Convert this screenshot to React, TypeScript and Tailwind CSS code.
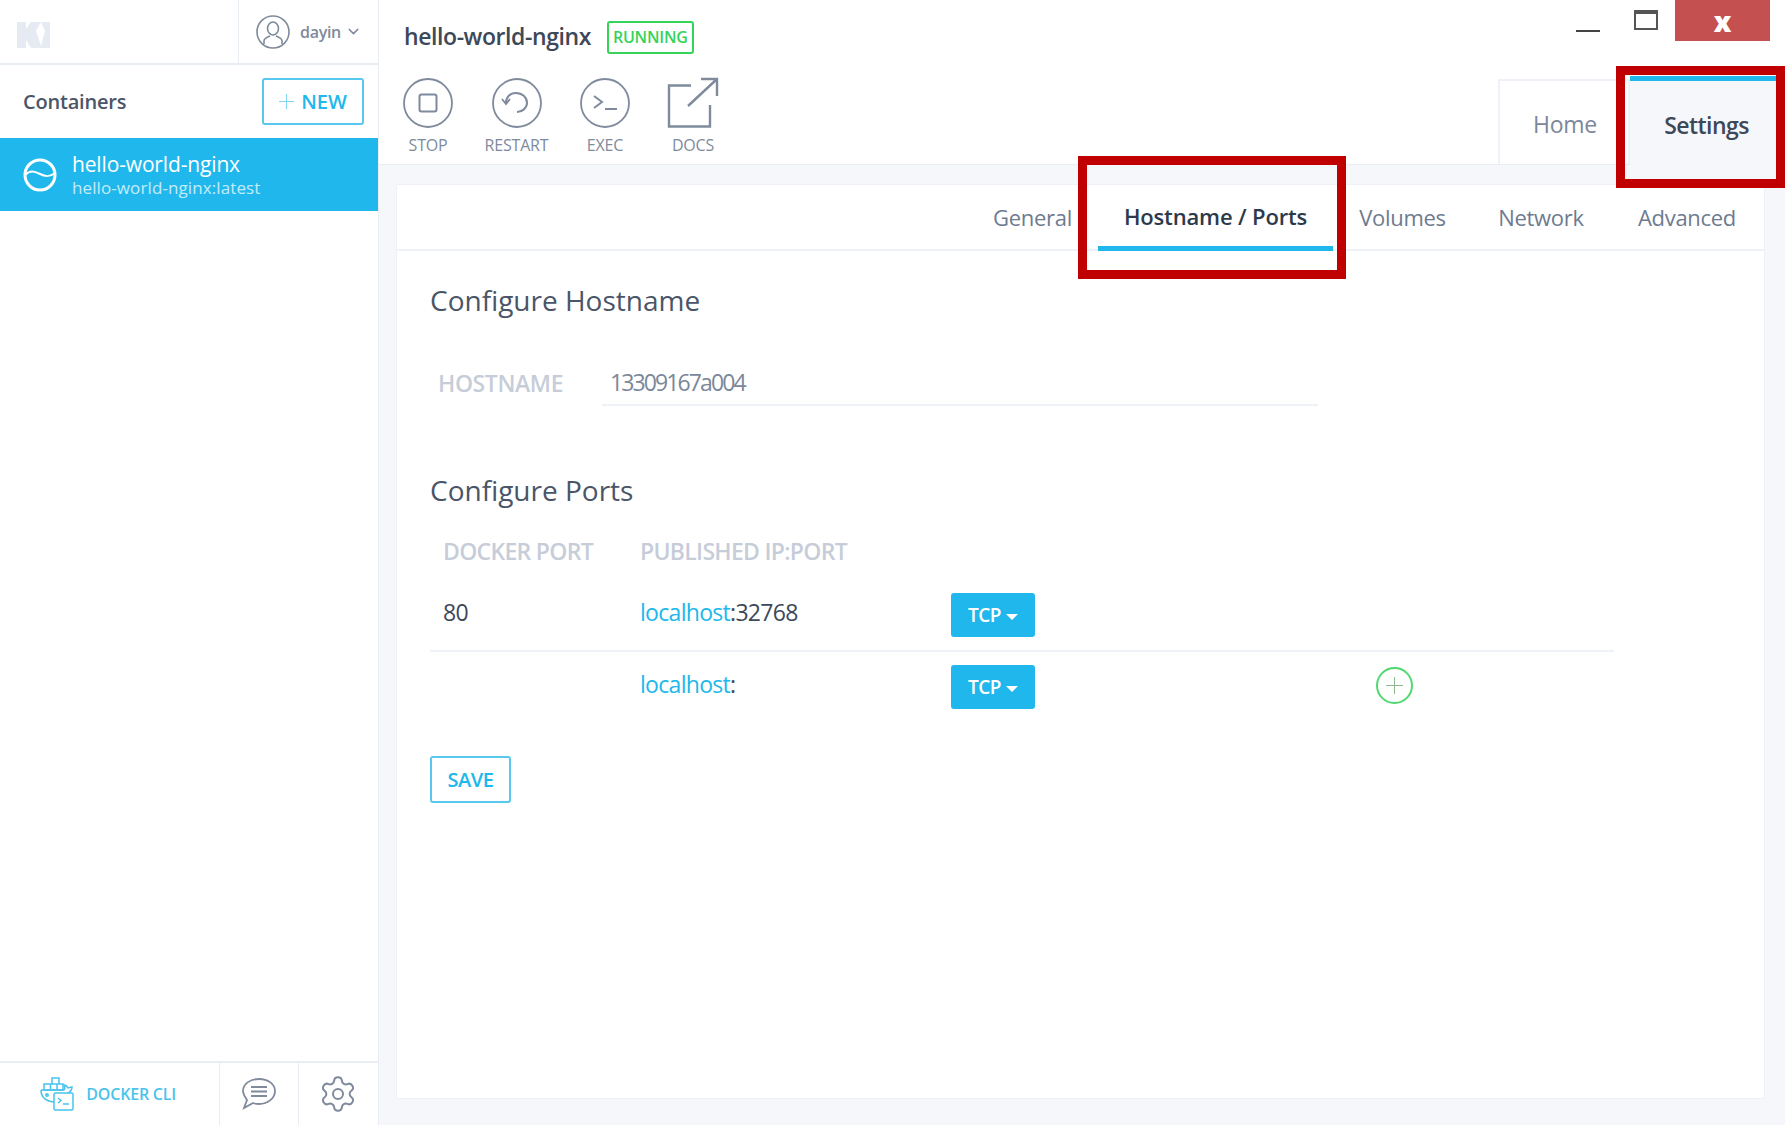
import React from 'react';
import { ChevronDown, Settings as Gear } from 'lucide-react';

const Logo = () => (
  <svg width="33" height="26" viewBox="0 0 33 26" fill="#e6ebf3">
    <path d="M0 0h9v7l5-7h10l-5 9 5 15 4-15-4-9h9v26H14L9 18v8H0z" />
  </svg>
);

const UserIcon = () => (
  <svg width="34" height="34" viewBox="0 0 34 34" fill="none" stroke="#7f8a9c" strokeWidth="1.600">
    <circle cx="17" cy="17" r="16" />
    <ellipse cx="17" cy="13.500" rx="5.500" ry="6.500" />
    <path d="M8 29v-3c0-3 4-4 6-5M26 29v-3c0-3-4-4-6-5" />
  </svg>
);

const ContainerIcon = () => (
  <svg width="34" height="34" viewBox="0 0 34 34" fill="none" stroke="#fff" strokeWidth="3">
    <circle cx="17" cy="17" r="15" />
    <path d="M2 17c5-5 9-4 15-1s10 3 15-1" strokeWidth="2" />
  </svg>
);

const ActionIcon = ({ kind }: { kind: string }) => {
  if (kind === 'docs') {
    return (
      <svg width="52" height="52" viewBox="0 0 52 52" fill="none" stroke="#7f8a9c" strokeWidth="2.400">
        <path d="M24 8.500H2v41h41V28" />
        <path d="M21 29L50 2M34 2h16v17" />
      </svg>
    );
  }
  return (
    <svg width="50" height="50" viewBox="0 0 50 50" fill="none" stroke="#7f8a9c" strokeWidth="1.800">
      <circle cx="25" cy="25" r="24" />
      {kind === 'stop' && <rect x="16.500" y="16.500" width="17" height="17" rx="2" strokeWidth="2" />}
      {kind === 'restart' && (
        <>
          <path d="M14 25C14 19 18 15 24 15C30 15 35 19 35 25C35 30 30 34 25 34" strokeWidth="2" />
          <path d="M10 21L14 26L18 21" strokeWidth="1.800" />
        </>
      )}
      {kind === 'exec' && (
        <>
          <path d="M14 18l8 6-8 6" strokeWidth="2" />
          <path d="M25 31h12" strokeWidth="2" />
        </>
      )}
    </svg>
  );
};

const DockerCliIcon = () => (
  <svg width="34" height="34" viewBox="0 0 34 34" fill="none" stroke="#49c3ee" strokeWidth="1.500">
    <path d="M12 1h7v6h-7zM4 7h19v6H4zM10.500 7v6M17 7v6" />
    <path d="M1 13h23c1-1 1-3 0-5 2 0 3 1 4 3l4-1c0 3-2 5-4 6M1 13c0 6 3 11 13 12" />
    <circle cx="7" cy="18" r="1.200" />
    <rect x="14" y="16" width="19" height="17" rx="1.500" fill="#fff" />
    <path d="M18 21l3 2.500-3 2.500M23 27h6" />
  </svg>
);

const ChatIcon = () => (
  <svg width="36" height="34" viewBox="0 0 36 34" fill="none" stroke="#7f8a9c" strokeWidth="1.800">
    <path d="M18 2c9 0 16 5 16 12s-7 13-16 13c-2 0-4 0-6-1l-9 5 3-8c-2-3-4-6-4-9C2 7 9 2 18 2z" />
    <path d="M10 10h16M10 14.500h16M10 19h16" />
  </svg>
);

const TcpButton = () => (
  <button className="flex h-[44px] w-[84px] items-center justify-center gap-[5px] rounded-[3px] bg-[#20b8ec] text-[19px] font-semibold tracking-[-0.5px] text-white">
    TCP
    <span className="mt-1 h-0 w-0 border-x-[6px] border-t-[6px] border-x-transparent border-t-white" />
  </button>
);

const Action = ({ kind, label, width }: { kind: string; label: string; width: string }) => (
  <div className={`flex flex-col items-center ${width}`}>
    <div className="flex h-[52px] items-center">
      <ActionIcon kind={kind} />
    </div>
    <span className="mt-[6px] text-[16px] leading-[20px] tracking-[-0.2px] text-[#7f8a9c]">{label}</span>
  </div>
);

const SubTab = ({ label, active, width }: { label: string; active?: boolean; width: string }) => (
  <div
    className={`relative -mb-px flex h-[66px] items-center justify-center text-[22px] ${width} ${
      active
        ? 'border-b-[5px] border-[#20b8ec] pt-[3px] font-semibold tracking-[-0.15px] text-[#2d3a4c]'
        : 'tracking-[-0.3px] text-[#6e7b8f]'
    }`}
  >
    {label}
  </div>
);

export default function App() {
  return (
    <div className="relative flex h-screen w-full overflow-hidden bg-white font-['Open_Sans',sans-serif] text-[#3d4858]">
      {/* sidebar */}
      <aside className="flex w-[379px] shrink-0 flex-col border-r border-[#e8edf4] bg-white">
        <div className="flex h-[65px] border-b-2 border-[#e8edf4]">
          <div className="flex flex-1 items-center pl-[17px] pt-[6px]">
            <Logo />
          </div>
          <div className="flex w-[140px] items-center gap-[10px] border-l border-[#e8edf4] pl-[17px]">
            <UserIcon />
            <span className="text-[16px] font-semibold tracking-[-0.3px] text-[#7f8a9c]">dayin</span>
            <ChevronDown size={17} className="-ml-[6px] text-[#7f8a9c]" />
          </div>
        </div>
        <div className="flex h-[73px] items-center justify-between pl-[23px] pr-[14px]">
          <span className="text-[20px] font-semibold tracking-[-0.2px] text-[#4a5568]">Containers</span>
          <button className="flex h-[47px] w-[102px] items-center justify-center gap-[7px] rounded-[3px] border-2 border-[#58c8ef] text-[20px] font-semibold text-[#20b8ec]">
            <span className="relative h-[15px] w-[15px]">
              <span className="absolute left-0 top-[7px] h-px w-[15px] bg-[#7fd4f2]" />
              <span className="absolute left-[7px] top-0 h-[15px] w-px bg-[#7fd4f2]" />
            </span>
            NEW
          </button>
        </div>
        <div className="flex h-[73px] items-center gap-[15px] bg-[#20b8ec] pl-[23px]">
          <ContainerIcon />
          <div className="flex flex-col">
            <span className="text-[21px] leading-[26px] tracking-[-0.15px] text-white">hello-world-nginx</span>
            <span className="text-[17px] leading-[21px] tracking-[0.1px] text-[#c3ecfa]">hello-world-nginx:latest</span>
          </div>
        </div>
        <div className="flex-1" />
        <div className="flex h-[64px] border-t-2 border-[#e8edf4]">
          <div className="flex w-[219px] items-center justify-end gap-[12px] pr-[43px]">
            <DockerCliIcon />
            <span className="text-[16px] font-semibold tracking-[-0.2px] text-[#49c3ee]">DOCKER CLI</span>
          </div>
          <div className="flex w-[79px] items-center justify-center border-l border-[#e8edf4]">
            <ChatIcon />
          </div>
          <div className="flex flex-1 items-center justify-center border-l border-[#e8edf4] pr-[2px]">
            <Gear size={40} strokeWidth={1.200} className="text-[#7f8a9c]" />
          </div>
        </div>
      </aside>

      {/* main */}
      <main className="flex min-w-0 flex-1 flex-col bg-[#f5f7fb]">
        <header className="flex h-[165px] shrink-0 justify-between border-b border-[#e8edf4] bg-white">
          <div className="pl-[25px] pt-[16px]">
            <div className="flex items-center gap-[16px]">
              <h1 className="text-[23px] font-semibold leading-[40px] tracking-[-0.42px] text-[#3d4858]">hello-world-nginx</h1>
              <span className="mt-[2px] rounded-[3px] border-2 border-[#35d35a] px-[4px] text-[16px] font-semibold leading-[29px] tracking-[-0.2px] text-[#35d35a]">
                RUNNING
              </span>
            </div>
            <div className="mt-[21px] -ml-[20px] flex">
              <Action kind="stop" label="STOP" width="w-[88px]" />
              <Action kind="restart" label="RESTART" width="w-[89px]" />
              <Action kind="exec" label="EXEC" width="w-[88px]" />
              <Action kind="docs" label="DOCS" width="w-[88px]" />
            </div>
          </div>
          <div className="flex flex-col items-end">
            <div className="flex h-[80px] items-start pr-[15px]">
              <span className="mt-[30px] h-[2px] w-[24px] bg-[#444]" />
              <span className="ml-[34px] mt-[10px] h-[20px] w-[24px] border-2 border-t-[4px] border-[#555]" />
              <span className="ml-[17px] flex h-[41px] w-[95px] items-center justify-center bg-[#c45050] text-[28px] font-extrabold leading-[30px] text-white">
                x
              </span>
            </div>
            <div className="flex h-[85px] self-stretch">
              <div className="flex h-[85px] w-[132px] items-center justify-center border-l-2 border-r-2 border-t-2 border-[#eef2f8] pl-[2px] pt-[3px] text-[23px] tracking-[-0.3px] text-[#7b879a]">
                Home
              </div>
              <div className="relative -mb-px -mt-[3px] flex w-[146px] items-center justify-center border-t-[5px] border-[#20b8ec] bg-[#f5f7fb] pl-[7px] pt-[5px] text-[23px] font-semibold tracking-[-0.55px] text-[#3d4858]">
                Settings
              </div>
              <div className="w-[9px]" />
            </div>
          </div>
        </header>

        <div className="min-h-0 flex-1 pb-[26px] pl-[17px] pr-[20px] pt-[19px]">
          <section className="flex h-full flex-col rounded-[2px] border border-[#edf0f6] bg-white">
            <nav className="flex h-[66px] shrink-0 items-center justify-end border-b-2 border-[#eef2f8]">
              <SubTab label="General" width="w-[131px]" />
              <SubTab label="Hostname / Ports" active width="w-[235px]" />
              <SubTab label="Volumes" width="w-[139px]" />
              <SubTab label="Network" width="w-[138px]" />
              <SubTab label="Advanced" width="w-[154px]" />
            </nav>

            <div className="px-[33px] pt-[30px]">
              <h2 className="text-[28px] leading-[38px] text-[#4a5568]">Configure Hostname</h2>
              <div className="mt-[45px] flex items-center">
                <span className="ml-[8px] -mt-[4px] w-[164px] text-[23px] font-semibold tracking-[-0.4px] text-[#c6cdd9]">HOSTNAME</span>
                <div className="w-[716px] border-b-2 border-[#eef2f8] pb-[4px] pl-[8px] pt-[1px] text-[23px] tracking-[-1.900px] text-[#7b879a]">
                  13309167a004
                </div>
              </div>

              <h2 className="mt-[65px] text-[28px] leading-[38px] text-[#4a5568]">Configure Ports</h2>
              <div className="mt-[25px] flex w-[1184px] text-[23px] font-semibold tracking-[-0.7px] text-[#c6cdd9]">
                <span className="ml-[13px] w-[197px]">DOCKER PORT</span>
                <span>PUBLISHED IP:PORT</span>
              </div>
              <div className="mt-[25px] flex h-[59px] w-[1184px] items-start border-b-2 border-[#eef2f8] text-[23px] tracking-[-0.7px]">
                <span className="ml-[13px] w-[197px] leading-[38px]">80</span>
                <span className="w-[311px] leading-[38px]">
                  <span className="text-[#20b8ec]">localhost</span>:32768
                </span>
                <TcpButton />
              </div>
              <div className="mt-[13px] flex h-[44px] w-[1184px] items-start text-[23px] tracking-[-0.7px]">
                <span className="ml-[13px] w-[197px]" />
                <span className="w-[311px] leading-[38px]">
                  <span className="text-[#20b8ec]">localhost</span>:
                </span>
                <TcpButton />
                <span className="relative ml-[341px] mt-[2px] h-[37px] w-[37px] rounded-full border-2 border-[#4fd96f]">
                  <span className="absolute left-[8px] top-[16px] h-px w-[17px] bg-[#8dbb8f]" />
                  <span className="absolute left-[16px] top-[8px] h-[17px] w-px bg-[#8dbb8f]" />
                </span>
              </div>
              <button className="mt-[47px] flex h-[47px] w-[81px] items-center justify-center rounded-[3px] border-2 border-[#58c8ef] text-[20px] font-semibold tracking-[-0.4px] text-[#20b8ec]">
                SAVE
              </button>
            </div>
          </section>
        </div>
      </main>

      {/* red annotation boxes */}
      <div className="pointer-events-none absolute left-[1078px] top-[156px] h-[123px] w-[268px] border-[9px] border-[#c00000]" />
      <div className="pointer-events-none absolute left-[1616px] top-[66px] h-[122px] w-[169px] border-[9px] border-[#c00000]" />
    </div>
  );
}
